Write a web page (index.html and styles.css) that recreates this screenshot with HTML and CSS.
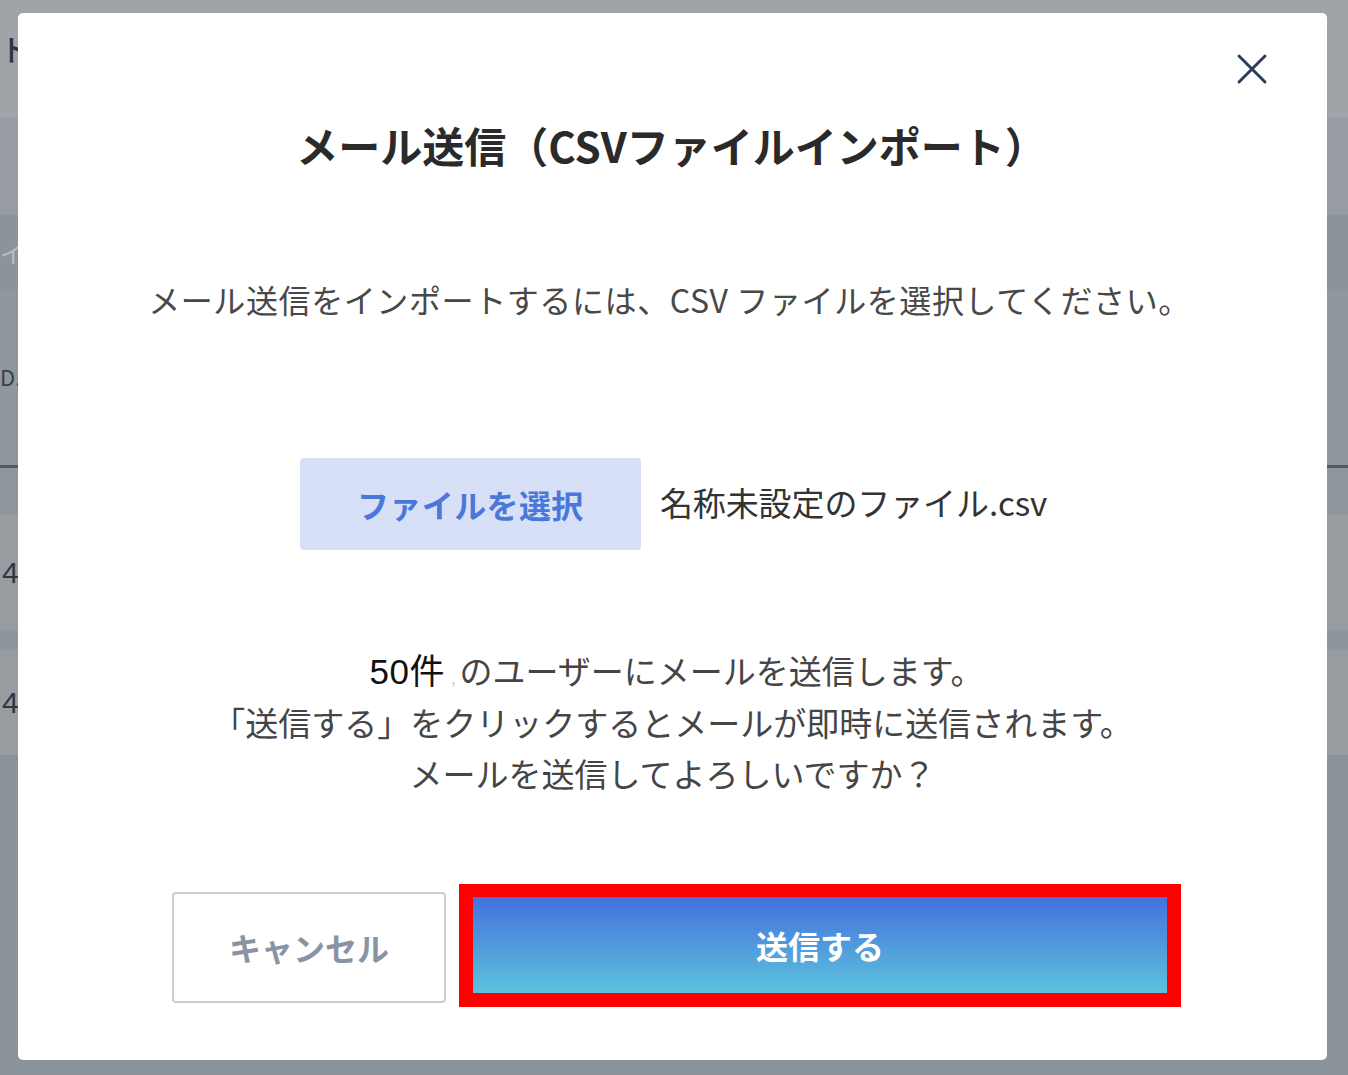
FILE: index.html
```html
<!DOCTYPE html>
<html lang="ja">
<head>
<meta charset="utf-8">
<title>メール送信（CSVファイルインポート）</title>
<link rel="stylesheet" href="styles.css">
</head>
<body>
<div class="page">
  <div class="row row-head"><span class="bg-text bg-head">ト</span></div>
  <div class="row row-sub"></div>
  <div class="row row-th"><span class="bg-text bg-th">イ</span></div>
  <div class="row row-filter"><span class="bg-text bg-d">D.</span></div>
  <div class="row row-line"></div>
  <div class="row row-gap"></div>
  <div class="row row-data"><span class="bg-text bg-num">4</span></div>
  <div class="row row-sep"></div>
  <div class="row row-data2"><span class="bg-text bg-num">4</span></div>
  <div class="row row-rest"></div>
</div>

<div class="overlay">
  <div class="modal">
    <button class="close" aria-label="閉じる">
      <svg width="32" height="32" viewBox="0 0 32 32"><path d="M3 3 L29 29 M29 3 L3 29" fill="none" stroke="#2c3d5a" stroke-width="3" stroke-linecap="round"/></svg>
    </button>
    <h1 class="title">メール送信（CSVファイルインポート）</h1>
    <p class="desc">メール送信をインポートするには、CSV ファイルを選択してください。</p>
    <div class="file-row">
      <button class="file-btn">ファイルを選択</button>
      <span class="file-name">名称未設定のファイル.csv</span>
    </div>
    <div class="message">
      <p class="first"><span class="count">50件</span><span class="dot">,</span>のユーザーにメールを送信します。</p>
      <p>「送信する」をクリックするとメールが即時に送信されます。</p>
      <p>メールを送信してよろしいですか？</p>
    </div>
    <div class="actions">
      <button class="cancel">キャンセル</button>
      <div class="highlight">
        <button class="send">送信する</button>
      </div>
    </div>
  </div>
</div>
</body>
</html>
```

FILE: styles.css
```css
* { box-sizing: border-box; }
html, body { margin: 0; padding: 0; }
body {
  width: 1348px;
  height: 1075px;
  overflow: hidden;
  position: relative;
  background: #8a939a;
  font-family: "Noto Sans CJK JP", "Noto Sans", sans-serif;
}

.page { display: flex; flex-direction: column; }
.row { display: flex; align-items: center; position: relative; }
.row-head { height: 118px; background: #9fa4a8; }
.row-sub { height: 97px; background: #969ca1; }
.row-th { height: 75px; background: #8b949a; }
.row-filter { height: 175px; background: #8f979d; }
.row-line { height: 3px; background: #4d5c6f; }
.row-gap { height: 47px; background: #8f979d; }
.row-data { height: 115px; background: #969ca0; }
.row-sep { height: 20px; background: #8e969c; }
.row-data2 { height: 105px; background: #969ca0; }
.row-rest { flex: 1; height: 320px; background: #8a939a; }

.bg-text { font-size: 30px; color: #2e3640; line-height: 1; }
.bg-head { margin-left: 0; margin-top: -22px; font-weight: 500; }
.bg-th { margin-left: 0; color: #b8bec3; font-size: 24px; }
.bg-d { margin-left: 0; margin-top: -4px; color: #3a4048; font-size: 22px; }
.bg-num { margin-left: 2px; font-family: "Liberation Sans", sans-serif; font-size: 30px; color: #2e3640; }

.overlay { position: absolute; inset: 0; }
.modal {
  position: absolute;
  left: 18px;
  top: 13px;
  width: 1309px;
  height: 1047px;
  background: #ffffff;
  border-radius: 5px;
  display: flex;
  flex-direction: column;
  align-items: center;
  padding-top: 102px;
}

.close {
  position: absolute;
  right: 59px;
  top: 40px;
  width: 32px;
  height: 32px;
  padding: 0;
  border: 0;
  background: none;
  display: flex;
}

.title {
  margin: 0 0 0 -2px;
  font-size: 42px;
  line-height: 60px;
  font-weight: 700;
  color: #2a2a2a;
  letter-spacing: 0;
}

.desc {
  margin: 101px 0 0 -6px;
  font-size: 32px;
  line-height: 46px;
  color: #484848;
  letter-spacing: 0.6px;
}

.file-row {
  margin: 136px 0 0 2px;
  display: flex;
  align-items: center;
  gap: 19px;
}
.file-btn {
  width: 341px;
  height: 92px;
  border: 0;
  border-radius: 4px;
  background: #d8e0f8;
  color: #4a78d8;
  font-family: inherit;
  font-size: 32px;
  font-weight: 700;
  letter-spacing: 0.4px;
  padding: 0;
}
.file-name {
  font-size: 33px;
  color: #333;
  margin-top: -4px;
  letter-spacing: -0.1px;
}

.message {
  margin: 95px 0 0 0;
  text-align: center;
  color: #454545;
  font-size: 33px;
  line-height: 51.5px;
}
.message p { margin: 0; height: 51.5px; white-space: nowrap; }
.message .first { padding-left: 8px; }
.count {
  font-family: "Liberation Sans", "Noto Sans CJK JP", sans-serif;
  color: #111;
  font-size: 35px;
  line-height: 40px;
  font-weight: 400;
  letter-spacing: 0.5px;
}
.dot { color: #cfcfcf; font-size: 16px; line-height: 20px; margin: 0 4px 0 6px; }

.actions {
  margin: 84px 0 0 8px;
  display: flex;
  align-items: center;
  gap: 13px;
}
.cancel {
  width: 274px;
  height: 111px;
  background: #fff;
  border: 2px solid #c9ced6;
  border-radius: 4px;
  color: #8a93a3;
  font-family: inherit;
  font-size: 32px;
  font-weight: 700;
  padding: 0;
  margin-top: 4px;
}
.highlight {
  border: 14px solid #ff0000;
  border-top-width: 13px;
  display: flex;
}
.send {
  width: 694px;
  height: 96px;
  border: 0;
  padding: 0;
  background: linear-gradient(180deg, #4470de 0%, #5cc3dc 100%);
  color: #fff;
  font-family: inherit;
  font-size: 32px;
  font-weight: 700;
}
```
